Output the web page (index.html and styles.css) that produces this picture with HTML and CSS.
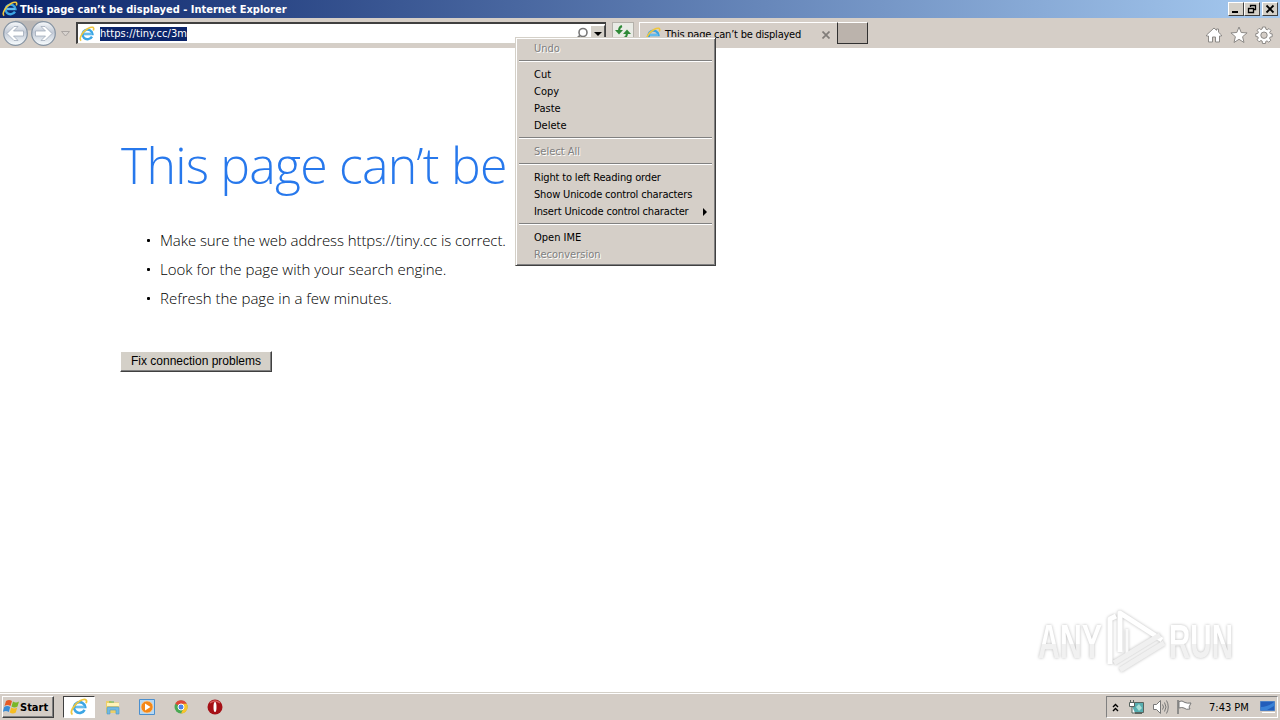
FILE: index.html
```
<!DOCTYPE html>
<html lang="en">
<head>
    <meta charset="utf-8">
    <title>This page can’t be displayed</title>
    <link rel="stylesheet" href="styles.css">
</head>
<body>
    <!-- Shared icon -->
    <svg width="0" height="0" class="defs">
        <symbol id="ie" viewBox="0 0 16 16">
            <path d="M13 10.600A5 4.800 0 1 1 13.500 8H4.600" fill="none" stroke="#3ba5e4" stroke-width="2.300"/>
            <path d="M5 8h8" stroke="#9edcf9" stroke-width=".8"/>
            <path d="M2.200 14.600C-.8 13 3.500 5.500 9 2.500c4-2.200 6.800-1.500 5.300 2" fill="none" stroke="#efc63e" stroke-width="1.600"/>
        </symbol>
    </svg>

    <div class="window">
        <div class="titlebar">
            <svg class="icon16"><use href="#ie"/></svg>
            <span class="title">This page can’t be displayed - Internet Explorer</span>
            <div class="controls">
                <button><svg viewBox="0 0 12 10"><path d="M2 8h6" stroke="#000" stroke-width="2"/></svg></button>
                <button><svg viewBox="0 0 12 10"><path d="M4.500 3V1.500h5v4H8M4 1.500h6M2.500 4.500h5v4h-5zM2 4.500h6" fill="none" stroke="#000" stroke-width="1.300"/></svg></button>
                <button class="close"><svg viewBox="0 0 12 10"><path d="M2.500 1.500l7 7m0-7l-7 7" stroke="#000" stroke-width="1.800"/></svg></button>
            </div>
        </div>

        <div class="toolbar">
            <svg class="nav" width="74" height="30" viewBox="0 0 74 30">
                <defs>
                    <linearGradient id="ball" x2="0" y2="1">
                        <stop offset="0" stop-color="#f8fafc"/>
                        <stop offset=".45" stop-color="#c3cad6"/>
                        <stop offset="1" stop-color="#f8fdff"/>
                    </linearGradient>
                </defs>
                <path d="M15 2.500h28v7q-14 6-28 0z" fill="#bcb8b6"/>
                <g fill="url(#ball)" stroke="#8593a2" stroke-width="1.200">
                    <circle cx="15.500" cy="15.500" r="11.800"/>
                    <circle cx="43.500" cy="15.500" r="11.800"/>
                </g>
                <g fill="#fff" stroke="#98a4b3" stroke-width=".7">
                    <path d="M7 15.500l7-7h4l-4.500 4.500h10v5h-10l4.500 4.500h-4z"/>
                    <path d="M52 15.500l-7-7h-4l4.500 4.500h-10v5h10l-4.500 4.500h4z"/>
                </g>
                <path d="M61.500 13.500h8l-4 4.500z" fill="#d8d3cf" stroke="#aaa5a2"/>
            </svg>
            <div class="address">
                <svg class="icon16"><use href="#ie"/></svg>
                <span class="url">https://tiny.cc/3m</span>
                <svg class="search" width="14" height="14" viewBox="0 0 14 14"><circle cx="7" cy="5.500" r="4" fill="none" stroke="#777" stroke-width="1.600"/><path d="M4 8.500l-3 3" stroke="#777" stroke-width="2"/></svg>
                <span class="drop"><svg width="8" height="4"><path d="M0 0h8L4 4z"/></svg></span>
            </div>
            <div class="refresh">
                <svg width="16" height="14" viewBox="0 0 16 14" fill="none" stroke="#2f8a38" stroke-width="2"><path d="M7 1Q4 2 4 6"/><path d="M0 5h8L4 9.500z" fill="#2f8a38" stroke="none"/><path d="M12 8q0 4-3 5"/><path d="M8 9h8L12 4.500z" fill="#2f8a38" stroke="none"/></svg>
            </div>
            <div class="tab">
                <svg class="icon16"><use href="#ie"/></svg>
                <span>This page can’t be displayed</span>
                <svg class="tab-close" width="8" height="8"><path d="M.5 .5l7 7m0-7l-7 7" stroke="#817d79" stroke-width="1.700"/></svg>
            </div>
            <div class="new-tab"></div>
            <div class="tools">
                <svg width="18" height="18" viewBox="0 0 18 18"><path d="M1.500 9L9 2l2.500 2.300V3h2v3.200L16.500 9v1h-2v6h-4v-5h-3v5h-4v-6h-2z"/></svg>
                <svg width="18" height="18" viewBox="0 0 18 18"><path d="M9 1l2.200 5.500 5.900.4-4.500 3.800 1.400 5.800L9 13.300 4 16.500l1.400-5.800L.9 6.900l5.900-.4z"/></svg>
                <svg width="18" height="18" viewBox="0 0 18 18"><path fill-rule="evenodd" d="M7.500 1h3l.4 2.200 1.300.6L14 2.500 16 4.600l-1.300 1.800.5 1.200 2 .3v2.800l-2.100.4-.5 1.300 1.200 1.800-2 2-1.800-1.300-1.200.5-.3 2.100h-3L7.100 15l-1.200-.5-1.800 1.300-2-2 1.200-1.800-.5-1.200L.8 10.500V7.700l2.100-.4.5-1.200L2.100 4.300l2-2L5.900 3.600 7.100 3zM9 6a3.200 3.200 0 1 0 0 6.400A3.200 3.200 0 0 0 9 6z"/></svg>
            </div>
        </div>

        <div class="page">
            <h1>This page can’t be</h1>
            <ul>
                <li class="address-tip">Make sure the web address https://tiny.cc is correct.</li>
                <li>Look for the page with your search engine.</li>
                <li>Refresh the page in a few minutes.</li>
            </ul>
            <button class="fix">Fix connection problems</button>
        </div>
    </div>

    <div class="menu">
        <div class="item off">Undo</div>
        <hr>
        <div class="item">Cut</div>
        <div class="item">Copy</div>
        <div class="item">Paste</div>
        <div class="item">Delete</div>
        <hr>
        <div class="item off">Select All</div>
        <hr>
        <div class="item long">Right to left Reading order</div>
        <div class="item long">Show Unicode control characters</div>
        <div class="item long sub">Insert Unicode control character <svg width="4" height="8"><path d="M0 0l4 4-4 4z"/></svg></div>
        <hr>
        <div class="item">Open IME</div>
        <div class="item off">Reconversion</div>
    </div>

    <svg class="watermark" width="240" height="70" viewBox="0 0 240 70">
        <defs>
            <linearGradient id="fade" x2="0" y2="1">
                <stop offset=".55" stop-color="#fff"/>
                <stop offset=".56" stop-color="#f1f1f1"/>
            </linearGradient>
        </defs>
        <g class="brand" fill="url(#fade)">
            <text x="5" y="53" textLength="64" lengthAdjust="spacingAndGlyphs">ANY</text>
            <text x="136" y="53" textLength="64" lengthAdjust="spacingAndGlyphs">RUN</text>
        </g>
        <g class="brand" fill="none" stroke-width="5" stroke-linejoin="round">
            <path d="M77 59V14l6-3" stroke="#fff"/>
            <path d="M87 47V8l42 27" stroke="#fff"/>
            <path d="M94 24v27l27-17" stroke="#fafafa" stroke-width="3"/>
            <path d="M81 58l46-28M87 65l44-27" stroke="#f0f0f0"/>
        </g>
    </svg>

    <div class="taskbar">
        <div class="start">
            <svg width="17" height="16" viewBox="0 0 17 16">
                <path d="M3 2q3-2 6 0L7.500 7q-3-2-6 0z" fill="#e65a24"/>
                <path d="M10 2.500q3 2 6 0L14.500 7.500q-3 2-6 0z" fill="#79b729"/>
                <path d="M1.200 8q3-2 6 0L5.800 13q-3-2-6 0z" fill="#398bd5"/>
                <path d="M8.200 8.500q3 2 6 0L12.800 13.500q-3 2-6 0z" fill="#f6bd22"/>
            </svg>
            <span>Start</span>
        </div>
        <div class="task active"><svg class="icon18"><use href="#ie"/></svg></div>
        <div class="task">
            <svg width="16" height="16" viewBox="0 0 16 16"><path d="M1 2h5l1 1.500h7V14H1z" fill="#edcf68"/><path d="M2 4h12v3H2z" fill="#fff3b8"/><path d="M4 3h5" stroke="#58b85a"/><path d="M2 15V9q0-1 1-1h10q1 0 1 1v6h-3v-4H5v4z" fill="#71b9e2" stroke="#4c99c8" stroke-width=".6"/></svg>
        </div>
        <div class="task">
            <svg width="16" height="16" viewBox="0 0 16 16"><path d="M.5.500h15v15H.5z" fill="#b5d8f4" stroke="#4b8fce"/><circle cx="8" cy="8" r="6" fill="#f48717" stroke="#ffd09a" stroke-width=".7"/><path d="M6 4.500v7L11.500 8z" fill="#fff"/></svg>
        </div>
        <div class="task">
            <svg width="14" height="14" viewBox="0 0 14 14"><circle cx="7" cy="7" r="6.500" fill="#4aa953"/><path d="M7 7L1.300 3.700A6.500 6.500 0 0 1 12.700 3.700z" fill="#df4737"/><path d="M7 3.700h5.700A6.500 6.500 0 0 1 7 13.500L9.600 8z" fill="#fac42c"/><circle cx="7" cy="7" r="3" fill="#4d83e8" stroke="#fff"/></svg>
        </div>
        <div class="task">
            <svg width="16" height="16" viewBox="0 0 16 16"><circle cx="8" cy="8" r="7.500" fill="#a51016"/><path d="M3 4q5-4 10 0" stroke="#d55c5c" stroke-width="1.500" fill="none"/><ellipse cx="8" cy="8" rx="1.500" ry="5" fill="#fff"/></svg>
        </div>
        <div class="tray">
            <svg width="7" height="9" viewBox="0 0 7 9"><path d="M1 4l2.500-2.500L6 4M1 8l2.500-2.500L6 8" fill="none" stroke="#000" stroke-width="1.400"/></svg>
            <svg class="network" width="17" height="16" viewBox="0 0 17 16"><path d="M4.500 3.500h11v10h-11z" fill="#57aeb0" stroke="#59645f"/><path d="M7 14.500h7" stroke="#59645f"/><path d="M8 8l3-3 3 4-3 3z" fill="#a9dfd5"/><path d="M1.500 3.500h5v4h-5zM2.500 1v2m3-2v2M4 7v7h3" fill="#fff" stroke="#59645f"/></svg>
            <svg width="17" height="16" viewBox="0 0 17 16" fill="none" stroke="#777"><path d="M1.500 5.500h3l4-4v13l-4-4h-3z" fill="#fff"/><path d="M10.500 5.500q2 2.500 0 5m2-7q3 4.500 0 9m2-11q3.500 6.500 0 13"/></svg>
            <svg width="17" height="16" viewBox="0 0 17 16"><path d="M3 2.500q3-1.500 6 1 2 1 6 .5l-2 4 1 2q-4 1-6-1-2-1-5 0z" fill="#fff" stroke="#777"/><path d="M2 1v14" stroke="#777" stroke-width="1.500"/></svg>
            <span class="clock">7:43 PM</span>
            <svg class="desk" width="16" height="12" viewBox="0 0 16 12"><path d="M.5.500h14v9H.5z" fill="#235dba" stroke="#4b7fc5"/><path d="M1 6Q8 6 14 1v4L7 9H1z" fill="#3981d6"/><path d="M2 11.500h13" stroke="#fff"/></svg>
        </div>
    </div>
</body>
</html>
```
FILE: styles.css
```
* {
    box-sizing: border-box;
}

body {
    margin: 0;
    height: 720px;
    overflow: hidden;
    display: flex;
    flex-direction: column;
    background: #fff;
    color: #000;
    font-family: "DejaVu Sans Condensed", "DejaVu Sans", sans-serif;
    font-stretch: condensed;
    font-size: 11px;
}

svg {
    display: block;
    flex: none;
}

.defs {
    position: absolute;
}

.icon16 {
    width: 16px;
    height: 16px;
}

.icon18 {
    width: 18px;
    height: 18px;
}

.window {
    flex: 1;
}

.titlebar {
    display: flex;
    align-items: center;
    height: 18px;
    padding: 0 2px;
    background: linear-gradient(90deg, #0a246a, #a6caf0);
    color: #fff;
}

.title {
    margin-left: 2px;
    font-weight: bold;
    white-space: nowrap;
}

.controls {
    display: flex;
    margin-left: auto;
}

.controls button {
    width: 16px;
    height: 14px;
    padding: 1px;
    background: #d4d0c8;
    border: 1px solid;
    border-color: #fff #404040 #404040 #fff;
}

.controls .close {
    margin-left: 2px;
}

.toolbar {
    display: flex;
    height: 30px;
    background: #d5cec7;
}

.nav {
    margin-right: 2px;
}

.address {
    display: flex;
    align-items: center;
    width: 530px;
    height: 22px;
    margin-top: 4px;
    padding-left: 1px;
    background: #fff;
    border: 2px solid #404040;
    border-right-width: 1px;
    border-bottom: 1px solid #d4d0c8;
}

.url {
    margin-left: 5px;
    height: 14px;
    line-height: 14px;
    background: #0a246a;
    color: #fff;
    letter-spacing: 0.06px;
}

.search {
    margin-left: auto;
}

.drop {
    display: flex;
    align-items: center;
    justify-content: center;
    width: 15px;
    height: 18px;
    background: #d4d0c8;
    border: 1px solid;
    border-color: #fff #555 #555 #fff;
}

.refresh {
    width: 22px;
    height: 22px;
    margin: 4px 0 0 6px;
    padding: 2px;
    background: #e9ebe5;
    border: 1px solid #b4b1aa;
}

.tab {
    display: flex;
    align-items: center;
    width: 198px;
    height: 24px;
    margin: 4px 0 0 5px;
    padding: 0 7px 0 5px;
    border-top: 1px solid #fff;
    border-left: 1px solid #fff;
    white-space: nowrap;
}

.tab span {
    margin-left: 4px;
    letter-spacing: -0.22px;
}

.tab-close {
    margin-left: auto;
}

.new-tab {
    width: 31px;
    height: 22px;
    margin-top: 4px;
    background: #bbb3ac;
    border: 1px solid;
    border-color: #fff #303030 #303030 #303030;
}

.tools {
    display: flex;
    gap: 7px;
    margin: 8px 7px 0 auto;
}

.tools path {
    fill: #fff;
    stroke: #8c8986;
}

.page {
    padding: 83px 0 0 121px;
}

h1 {
    margin: 0;
    height: 69px;
    color: #2778ec;
    font: 300 50px/68px "Open Sans", "Noto Sans", sans-serif;
    letter-spacing: -0.8px;
    white-space: nowrap;
}

.page ul {
    margin: 26px 0 0;
    padding: 0;
    list-style: none;
    font: 300 15px/29px "Open Sans", "Noto Sans", sans-serif;
}

.page li {
    display: flex;
    align-items: center;
    padding-left: 26px;
}

.page li::before {
    content: "";
    width: 3px;
    height: 3px;
    margin-right: 10px;
    border-radius: 1px;
    background: #000;
}

.address-tip {
    letter-spacing: -0.08px;
}

.fix {
    display: block;
    width: 152px;
    height: 21px;
    margin: 38px 0 0 -1px;
    padding: 0;
    background: #d4d0c8;
    border: 1px solid;
    border-color: #fff #404040 #404040 #fff;
    box-shadow: inset -1px -1px #808080;
    font: 12px/17px "Liberation Sans", Arial, sans-serif;
}

.menu {
    position: absolute;
    left: 515px;
    top: 37px;
    width: 201px;
    height: 229px;
    padding: 2px;
    background: #d5cfc8;
    border: 1px solid;
    border-color: #d4d0c8 #404040 #404040 #d4d0c8;
    box-shadow: inset 1px 1px #fff, inset -1px -1px #808080;
}

.item {
    height: 17px;
    padding-left: 16px;
    line-height: 17px;
    white-space: nowrap;
}

.long {
    letter-spacing: -0.16px;
}

.off {
    color: #808080;
    text-shadow: 1px 1px #fff;
}

.sub {
    display: flex;
    align-items: center;
    justify-content: space-between;
    padding-right: 6px;
}

.menu hr {
    height: 2px;
    margin: 3px 1px 4px;
    border: 0;
    border-top: 1px solid #808080;
    border-bottom: 1px solid #fff;
}

.watermark {
    position: absolute;
    left: 1033px;
    top: 605px;
    font: bold 49px "Liberation Sans", Arial, sans-serif;
}

.brand {
    filter: drop-shadow(0 0 1.5px #bbb);
}

.taskbar {
    display: flex;
    align-items: center;
    height: 28px;
    padding: 2px 2px 1px;
    background: #d4cdc6;
    border-top: 1px solid #d4d0c8;
    box-shadow: inset 0 1px #fff;
}

.start {
    display: flex;
    align-items: center;
    width: 52px;
    height: 22px;
    margin-right: 9px;
    border: 1px solid;
    border-color: #fff #404040 #404040 #fff;
    box-shadow: inset -1px -1px #808080;
    font-weight: bold;
}

.task {
    display: flex;
    align-items: center;
    justify-content: center;
    width: 34px;
    height: 22px;
}

.active {
    width: 32px;
    margin-right: 1px;
    background: #fff;
    border: 1px solid;
    border-color: #404040 #fff #fff #404040;
}

.tray {
    display: flex;
    align-items: center;
    gap: 7px;
    width: 172px;
    height: 22px;
    margin-left: auto;
    padding-left: 5px;
    border: 1px solid;
    border-color: #808080 #fff #fff #808080;
    white-space: nowrap;
}

.network {
    margin-left: 2px;
}

.clock {
    margin: 0 4px 0 9px;
}
```
